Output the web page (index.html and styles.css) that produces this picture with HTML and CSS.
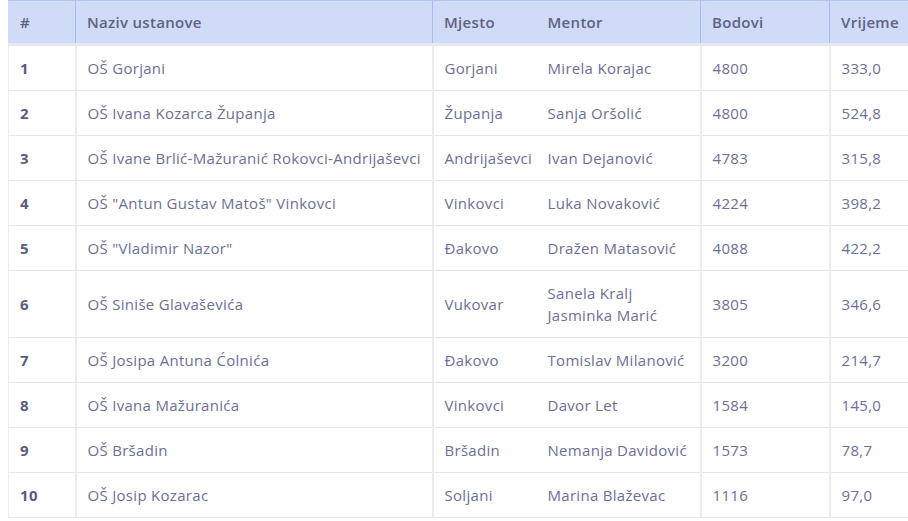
FILE: index.html
```html
<!DOCTYPE html>
<html lang="hr">
<head>
<meta charset="utf-8">
<title>Rang lista</title>
<link rel="stylesheet" href="styles.css">
</head>
<body>
<div class="wrap">
<table class="rank">
  <colgroup>
    <col class="c-num"><col class="c-name"><col class="c-place"><col class="c-mentor"><col class="c-pts"><col class="c-time">
  </colgroup>
  <thead>
    <tr>
      <th class="num">#</th>
      <th>Naziv ustanove</th>
      <th class="mid-start">Mjesto</th>
      <th class="mid-end">Mentor</th>
      <th>Bodovi</th>
      <th>Vrijeme</th>
    </tr>
  </thead>
  <tbody>
    <tr><td class="num">1</td><td>OŠ Gorjani</td><td class="mid-start">Gorjani</td><td class="mid-end">Mirela Korajac</td><td>4800</td><td>333,0</td></tr>
    <tr><td class="num">2</td><td>OŠ Ivana Kozarca Županja</td><td class="mid-start">Županja</td><td class="mid-end">Sanja Oršolić</td><td>4800</td><td>524,8</td></tr>
    <tr><td class="num">3</td><td>OŠ Ivane Brlić-Mažuranić Rokovci-Andrijaševci</td><td class="mid-start">Andrijaševci</td><td class="mid-end">Ivan Dejanović</td><td>4783</td><td>315,8</td></tr>
    <tr><td class="num">4</td><td>OŠ "Antun Gustav Matoš" Vinkovci</td><td class="mid-start">Vinkovci</td><td class="mid-end">Luka Novaković</td><td>4224</td><td>398,2</td></tr>
    <tr><td class="num">5</td><td>OŠ "Vladimir Nazor"</td><td class="mid-start">Đakovo</td><td class="mid-end">Dražen Matasović</td><td>4088</td><td>422,2</td></tr>
    <tr><td class="num">6</td><td>OŠ Siniše Glavaševića</td><td class="mid-start">Vukovar</td><td class="mid-end">Sanela Kralj<br>Jasminka Marić</td><td>3805</td><td>346,6</td></tr>
    <tr><td class="num">7</td><td>OŠ Josipa Antuna Ćolnića</td><td class="mid-start">Đakovo</td><td class="mid-end">Tomislav Milanović</td><td>3200</td><td>214,7</td></tr>
    <tr><td class="num">8</td><td>OŠ Ivana Mažuranića</td><td class="mid-start">Vinkovci</td><td class="mid-end">Davor Let</td><td>1584</td><td>145,0</td></tr>
    <tr><td class="num">9</td><td>OŠ Bršadin</td><td class="mid-start">Bršadin</td><td class="mid-end">Nemanja Davidović</td><td>1573</td><td>78,7</td></tr>
    <tr><td class="num">10</td><td>OŠ Josip Kozarac</td><td class="mid-start">Soljani</td><td class="mid-end">Marina Blaževac</td><td>1116</td><td>97,0</td></tr>
  </tbody>
</table>
</div>
</body>
</html>
```

FILE: styles.css
```css
html, body {
  overflow: hidden;
}
body {
  margin: 0 0 0 8px;
  background: #ffffff;
  font-family: "Open Sans", "Noto Sans", sans-serif;
  color: #6d7094;
}
.wrap {
  width: 1000px;
}
.rank {
  border-collapse: collapse;
  table-layout: fixed;
  width: 932px;
  font-size: 15px;
  letter-spacing: 0.3px;
}
.c-num { width: 67px; }
.c-name { width: 357px; }
.c-place { width: 104px; }
.c-mentor { width: 164px; }
.c-pts { width: 129px; }
.c-time { width: 111px; }

.rank th {
  background: #d0dbf8;
  color: #5e6283;
  font-weight: 600;
  text-align: left;
  height: 44px;
  padding: 0 11px;
  box-sizing: border-box;
  border-top: 1px solid #b3c3f3;
  border-left: 1px solid #a9baf1;
  border-bottom: 3px solid #e8e8f0;
}
.rank th.mid-end { border-left: none; }
.rank th.num { border-left: 1px solid #d0dbf8; }

.rank td {
  padding: 11px 11px;
  line-height: 22px;
  border-left: 2px solid #ebebf2;
  border-bottom: 1px solid #e6e6ef;
  font-weight: 400;
  vertical-align: middle;
  white-space: nowrap;
}
.rank td.mid-end { border-left: none; }
.rank td.num {
  border-left: 1px solid #ebebf2;
  font-weight: 700;
  color: #5a5d7d;
}
```
